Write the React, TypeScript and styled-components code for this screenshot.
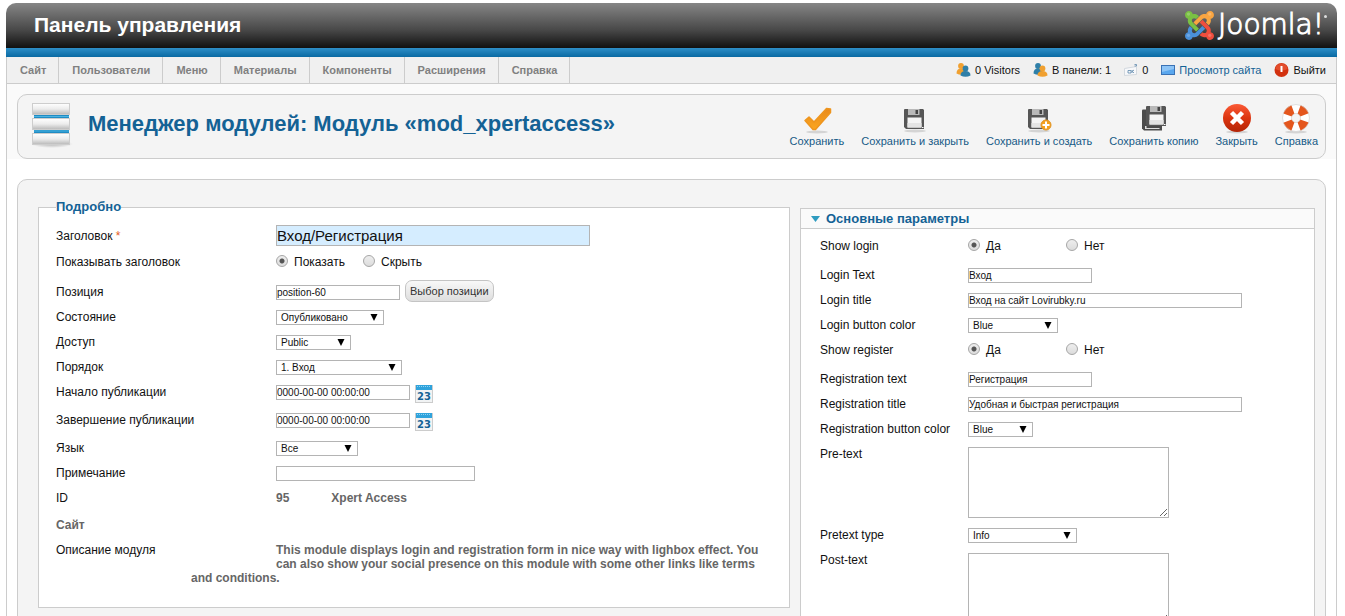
import React, { useId } from "react";
import styled, { createGlobalStyle, css } from "styled-components";

const GlobalStyle = createGlobalStyle`
  *, *::before, *::after { box-sizing: border-box; }
  body {
    margin: 0;
    background: #fff;
    color: #111;
    font: 12px/15px "Liberation Sans", Arial, sans-serif;
  }
  a { color: inherit; text-decoration: none; }
`;

/* ---------- Frame ---------- */

const Page = styled.div`
  margin: 3px 8px 0 6px;
`;

const Banner = styled.header`
  display: flex;
  align-items: center;
  justify-content: space-between;
  height: 54px;
  padding: 0 10px 10px 28px;
  border-radius: 10px 10px 0 0;
  background:
    linear-gradient(#2e8fc8, #0a6aa3) bottom / 100% 9px no-repeat,
    linear-gradient(#868686, #484848 50%, #101010 84%);
`;

const BannerTitle = styled.h1`
  margin: 0;
  color: #fff;
  font-size: 21px;
  line-height: 24px;
`;

const Brand = styled.a`
  display: flex;
  align-items: center;
  gap: 4px;
  color: #fff;
  font: 200 28px/30px "DejaVu Sans", sans-serif;
`;

const BrandName = styled.span`
  display: flex;
  align-items: flex-start;
  -webkit-text-stroke: 1px #fff;
`;

const BrandDot = styled.i`
  width: 3px;
  height: 3px;
  margin-top: 5px;
  border-radius: 50%;
  background: #ddd;
`;

const Shell = styled.div`
  border: 1px solid #ccc;
  border-top: 0;
  border-bottom: 0;
`;

/* ---------- Menu bar ---------- */

const MenuBar = styled.div`
  display: flex;
  justify-content: space-between;
  height: 27px;
  border-bottom: 1px solid #ccc;
  background: #f0f0f0;
  font-size: 11px;
  line-height: 26px;
`;

const Menu = styled.nav`
  display: flex;
`;

const MenuLink = styled.a`
  padding: 0 12px 0 13px;
  border-right: 1px solid #ccc;
  color: #808080;
  font-weight: bold;
`;

const Status = styled.div`
  display: flex;
  gap: 13px;
  padding-right: 10px;
`;

const StatusItem = styled.span<{ $link?: boolean }>`
  display: flex;
  align-items: center;
  gap: 4px;
  color: ${(p) => (p.$link ? "#146295" : "#111")};
`;

/* ---------- Title and toolbar ---------- */

const ToolbarArea = styled.div`
  padding: 10px 10px 0;
  background: #fafafa;
`;

const ToolbarBox = styled.div`
  display: flex;
  justify-content: space-between;
  height: 65px;
  padding: 7px 7px 0 13px;
  border: 1px solid #ccc;
  border-radius: 10px;
  background: #f4f4f4;
`;

const PageTitle = styled.div`
  display: flex;
  gap: 15px;
`;

const PageHeading = styled.h2`
  margin: 8px 0 0;
  color: #146295;
  font-size: 22px;
  line-height: 28px;
`;

const Tools = styled.div`
  display: flex;
  align-items: flex-start;
  gap: 17px;
`;

const Tool = styled.button`
  display: flex;
  flex-direction: column;
  align-items: center;
  gap: 1px;
  padding: 0;
  border: 0;
  background: none;
  color: #175a86;
  font: 11px/13px "Liberation Sans", Arial, sans-serif;
  cursor: pointer;
`;

/* ---------- Content ---------- */

const Content = styled.form`
  display: grid;
  grid-template-columns: 752fr 515fr;
  align-items: start;
  gap: 10px;
  margin: 20px 10px 0;
  padding: 20px 10px 20px 20px;
  border: 1px solid #ccc;
  border-radius: 10px;
  background: #f4f4f4;
`;

const Fieldset = styled.fieldset`
  min-width: 0;
  margin: 0;
  padding: 11px 17px 22px;
  border: 1px solid #ccc;
  background: #fff;
`;

const Legend = styled.legend`
  padding: 0;
  color: #146295;
  font-size: 13px;
  font-weight: bold;
  line-height: 14px;
`;

const Panel = styled.section`
  margin-top: 8px;
  border: 1px solid #ccc;
  background: #fff;
`;

const PanelHeading = styled.h3`
  display: flex;
  align-items: center;
  gap: 6px;
  height: 20px;
  margin: 0;
  padding-left: 10px;
  border-bottom: 1px solid #ccc;
  background: #fafafa;
  color: #146295;
  font-size: 13px;
`;

const PanelBody = styled.div`
  padding: 10px 19px 20px;
`;

const Row = styled.div<{ $height?: number; $label?: number }>`
  display: grid;
  grid-template-columns: ${(p) => p.$label ?? 220}px 1fr;
  align-items: start;
  min-height: ${(p) => p.$height ?? 25}px;
`;

const Label = styled.label<{ $top?: number }>`
  padding-top: ${(p) => p.$top ?? 0}px;
`;

const RowName = styled(Label).attrs({ as: "span" })``;

const Star = styled.span`
  color: #e65c1f;
`;

const Strong = styled.span`
  color: #666;
  font-weight: bold;
`;

const Controls = styled.div`
  display: flex;
  align-items: flex-start;
  gap: 5px;
`;

const box = css`
  border: 1px solid #b4b4b4;
  border-radius: 0;
  background: #fff;
  color: #111;
  font: 10px/13px "Liberation Sans", Arial, sans-serif;
`;

const TextBox = styled.input<{ $width: number; $top?: number }>`
  ${box}
  width: ${(p) => p.$width}px;
  height: 15px;
  margin: ${(p) => p.$top ?? 0}px 0 0;
  padding: 0;
`;

const TitleBox = styled(TextBox)`
  height: 21px;
  background: #d5edff;
  font-size: 15px;
  line-height: 19px;
`;

const TextArea = styled.textarea`
  ${box}
  display: block;
  width: 201px;
  height: 71px;
  margin: 0;
  padding: 2px;
`;

const SelectBox = styled.div<{ $width: number }>`
  display: grid;
  align-items: center;
  width: ${(p) => p.$width}px;

  > * { grid-area: 1 / 1; }
  > svg { justify-self: end; margin-right: 6px; pointer-events: none; }
`;

const NativeSelect = styled.select`
  ${box}
  appearance: none;
  width: 100%;
  height: 15px;
  padding: 0 4px;
`;

const Radios = styled.div<{ $option?: number }>`
  display: flex;
  gap: ${(p) => (p.$option ? 0 : 18)}px;

  > * { min-width: ${(p) => p.$option ?? 0}px; }
`;

const RadioLabel = styled.label`
  display: flex;
  align-items: flex-start;
  gap: 6px;
`;

const Radio = styled.input`
  appearance: none;
  width: 12px;
  height: 12px;
  margin: 0;
  border: 1px solid #a6a6a6;
  border-radius: 50%;
  background: linear-gradient(#eee, #dcdcdc);

  &:checked {
    background:
      radial-gradient(circle, #555 0 2px, transparent 3px),
      linear-gradient(#eee, #dcdcdc);
  }
`;

const PickButton = styled.button`
  height: 22px;
  padding: 0 4px;
  border: 1px solid #c4c4c4;
  border-radius: 7px;
  background: linear-gradient(#f8f8f8, #dedede);
  color: #333;
  font: 11px/20px "Liberation Sans", Arial, sans-serif;
`;

const CalendarButton = styled.button`
  display: block;
  width: 18px;
  height: 18px;
  padding: 0;
  border: 0;
  background: none;
`;

const ModuleInfo = styled.span`
  display: flex;
  gap: 42px;
`;

const Description = styled.p`
  margin: 0;
  color: #666;
  font-weight: bold;
  line-height: 14px;

  &::before {
    content: "";
    float: left;
    width: 85px;
    height: 28px;
  }
`;

/* ---------- Drawings ---------- */

const JoomlaMark = () => (
  <svg width="29" height="29" viewBox="0 32 448 448" aria-hidden="true">
    <path fill="#7ac143" d="M.6 92.100C.6 58.800 27.400 32 60.400 32c30 0 54.500 21.900 59.200 50.200 32.600-7.600 67.100.6 96.500 30l-44.300 44.300c-20.500-20.500-42.600-16.300-55.400-3.500-14.300 14.300-14.300 37.900 0 52.200l99.500 99.500-44 44.300c-87.700-87.200-49.700-49.700-99.800-99.700-26.800-26.500-35-64.800-24.800-98.900C20.400 144.600.6 120.700.6 92.100z" />
    <path fill="#f9a541" d="M130.100 208.500l44.300 44.300c10-10 89.700-89.700 99.700-99.800 14.300-14.300 37.600-14.300 51.900 0 12.800 12.800 17 35-3.500 55.400l44 44.300c31.200-31.200 38.500-67.600 28.900-101.200 29.200-4.100 51.900-29.200 51.900-59.500 0-33.200-26.800-60.100-59.800-60.100-30.300 0-55.400 22.500-59.500 51.600-33.800-9.900-71.700-1.500-98.300 25.100-18.300 19.100-71.100 71.500-99.600 99.900z" />
    <path fill="#f04e3e" d="M396.400 360.700c8.200-32.700-.9-68.500-26.300-93.900-11.800-12.200 5 4.700-99.500-99.700l-44.300 44.300 99.700 99.700c14.300 14.300 14.300 37.600 0 51.900-12.800 12.800-35 17-55.400-3.500l-44 44.300c27.600 30.200 68 38.800 102.700 28 5.500 27.400 29.700 48.100 58.900 48.100 33 0 59.800-26.800 59.800-60.100 0-30.200-22.500-55-51.600-59.100z" />
    <path fill="#4a90d9" d="M312.100 307.600l-44-44.300c-87 86.400-50.400 50.400-99.700 99.800-14.300 14.300-37.600 14.300-51.900 0-13.100-13.400-16.900-35.300 3.200-55.400l-44-44.300c-30.200 30.200-38 65.200-29.500 98.300-26.700 6-46.200 29.900-46.200 58.200C0 453.200 26.800 480 59.800 480c28.600 0 52.500-19.800 58.600-46.700 32.700 8.200 68.500-.6 94.200-26 32.100-32 12.200-12.400 99.500-99.700z" />
    <g fill="#fff" opacity=".2">
      <circle cx="54" cy="80" r="26" />
      <circle cx="382" cy="80" r="26" />
      <circle cx="382" cy="408" r="26" />
      <circle cx="54" cy="408" r="26" />
    </g>
  </svg>
);

const ModuleIcon = () => (
  <svg width="42" height="48" viewBox="0 0 42 48" aria-hidden="true">
    <defs>
      <linearGradient id="bar" x2="0" y2="1">
        <stop offset="0" stopColor="#fff" />
        <stop offset=".5" stopColor="#ececec" />
        <stop offset="1" stopColor="#b8b8b8" />
      </linearGradient>
      <radialGradient id="barShadow">
        <stop offset="0" stopColor="#888" stopOpacity=".6" />
        <stop offset="1" stopColor="#888" stopOpacity="0" />
      </radialGradient>
    </defs>
    <ellipse cx="21" cy="42" rx="21" ry="4" fill="url(#barShadow)" />
    <path d="M3 12h35v20H3z" fill="#1f8cc4" />
    <path d="M3 14.500h35M3 29h35" stroke="#4db4e2" />
    {[1, 16, 31].map((y) => (
      <rect key={y} x="1.500" y={y + 0.5} width="37" height="11" fill="url(#bar)" stroke="#cdcdcd" />
    ))}
  </svg>
);

const People = ({ a, b }: { a: string; b: string }) => (
  <svg width="15" height="14" viewBox="0 0 14 14" aria-hidden="true">
    <circle cx="4.500" cy="3" r="2.900" fill={a} />
    <path d="M0 10.500q0-5 4.500-5T9 10.500q-4 2.500-9 0z" fill={a} />
    <circle cx="9" cy="5.400" r="2.900" fill={b} />
    <path d="M4 12.500Q4 8 9 8t5 4.500q-5 2.500-10 0z" fill={b} />
  </svg>
);

const MailIcon = () => (
  <svg width="14" height="14" viewBox="0 0 14 14" aria-hidden="true">
    <path d="M.5 5.500l12-2v8l-12 1z" fill="#f7f8fa" stroke="#d3d9df" />
    <path d="M4 7.500h3v2.500H4zM8 7v3M8 8.500l2-1.500M8.500 8.500l1.500 1.500M10.500 1.500h2v1.500h-2" fill="none" stroke="#5c87ab" strokeWidth=".8" />
  </svg>
);

const ScreenIcon = () => (
  <svg width="14" height="10" viewBox="0 0 14 10" aria-hidden="true">
    <rect x=".5" y=".5" width="13" height="9" fill="#5aa7ee" stroke="#3a72b5" />
    <path d="M1 1h12v3L1 7z" fill="#a2d0fa" opacity=".7" />
  </svg>
);

const PowerIcon = () => (
  <svg width="15" height="15" viewBox="0 0 15 15" aria-hidden="true">
    <circle cx="7.500" cy="7" r="7" fill="#d2310f" />
    <path d="M1.500 6a6 5.500 0 0 1 12 0q-6 3-12 0z" fill="#ef6040" opacity=".6" />
    <path d="M7.500 3v6" stroke="#fff" strokeWidth="2" />
  </svg>
);

const Shadow = ({ cy = 29 }: { cy?: number }) => <ellipse cx="16" cy={cy} rx="11" ry="1.500" fill="#000" opacity=".13" />;

const CheckIcon = () => (
  <svg width="32" height="32" viewBox="0 0 32 32" aria-hidden="true">
    <defs>
      <linearGradient id="check" x2="0" y2="1">
        <stop offset="0" stopColor="#e88a1c" />
        <stop offset="1" stopColor="#fba61f" />
      </linearGradient>
    </defs>
    <Shadow cy={30} />
    <path d="M4 18.500l4-3.500 5 5L25.500 6.500l4 .5v3.500L14.500 27.500h-2.500z" fill="url(#check)" stroke="#ee951e" strokeWidth="1.500" strokeLinejoin="round" />
  </svg>
);

const DiskShape = () => (
  <>
    <path d="M0 1q0-1 1-1h18l1 1v19H2l-2-2z" fill="#565656" />
    <path d="M4 0h11.500v6H4z" fill="#b9b9b9" />
    <path d="M11.500 1h2.500v4h-2.500z" fill="#444" />
    <path d="M3.500 8.500h14v10h-14z" fill="#f4f4f4" />
    <path d="M3.500 14h14v4.500h-14z" fill="#e4e4e4" />
    <path d="M18 18h1.500v1H18z" fill="#fff" />
  </>
);

const DiskIcon = ({ plus, copy }: { plus?: boolean; copy?: boolean }) => (
  <svg width="32" height="32" viewBox="0 0 32 32" aria-hidden="true">
    {!copy && <Shadow />}
    {copy && (
      <>
        <path d="M4 8.500q0-1 1-1h19v21H6l-2-2z" fill="#4c4c4c" />
        <path d="M7 24h1.500v2h13v1H7z" fill="#ddd" />
      </>
    )}
    <g transform={copy ? "translate(8 4)" : "translate(5 7)"}>
      <DiskShape />
    </g>
    {plus && (
      <>
        <circle cx="23" cy="23" r="5" fill="#f5a11c" stroke="#e09426" />
        <path d="M23 19.500v7M19.500 23h7" stroke="#fff" strokeWidth="2" />
      </>
    )}
  </svg>
);

const CloseIcon = () => (
  <svg width="32" height="32" viewBox="0 0 32 32" aria-hidden="true">
    <defs>
      <linearGradient id="close" x2="0" y2="1">
        <stop offset="0" stopColor="#fb5a36" />
        <stop offset=".5" stopColor="#dc3510" />
        <stop offset="1" stopColor="#b32506" />
      </linearGradient>
    </defs>
    <Shadow cy={30} />
    <circle cx="16" cy="16" r="14" fill="url(#close)" />
    <path d="M10.500 10.500l11 11M21.500 10.500l-11 11" stroke="#fff" strokeWidth="4.500" />
  </svg>
);

const HelpIcon = () => (
  <svg width="32" height="32" viewBox="0 0 32 32" aria-hidden="true">
    <Shadow cy={30} />
    <circle cx="16" cy="16" r="9" fill="none" stroke="#fff" strokeWidth="9" />
    <g fill="none" stroke="#e4561d" strokeWidth="9">
      {[20, 110, 200, 290].map((a) => (
        <path key={a} d="M25 16A9 9 0 0 1 21.790 22.890" transform={`rotate(${a} 16 16)`} />
      ))}
    </g>
    <circle cx="16" cy="16" r="13.500" fill="none" stroke="#ccc" strokeWidth=".6" />
    <circle cx="16" cy="16" r="4.500" fill="none" stroke="#d0c4be" strokeWidth=".6" />
  </svg>
);

const CalendarNumber = styled.text`
  fill: #146295;
  font: bold 10px "DejaVu Sans", sans-serif;
`;

const CalendarIcon = () => (
  <svg width="18" height="18" viewBox="0 0 18 18" aria-hidden="true">
    <rect x=".5" y=".5" width="17" height="17" fill="#f1f3f4" stroke="#ccc" />
    <path d="M1 0h16v5H1z" fill="#2fa3dc" />
    <path d="M2 1.500h14" stroke="#8fd2f2" strokeDasharray="1 1" />
    <CalendarNumber x="9" y="15" textAnchor="middle">23</CalendarNumber>
  </svg>
);

/* ---------- Composite fields ---------- */

const Select = ({ id, width, value }: { id: string; width: number; value: string }) => (
  <SelectBox $width={width}>
    <NativeSelect id={id} defaultValue={value}>
      <option>{value}</option>
    </NativeSelect>
    <svg width="8" height="7" viewBox="0 0 8 7" aria-hidden="true">
      <path d="M.5 0h7L4 7z" fill="#000" />
    </svg>
  </SelectBox>
);

const RadioGroup = ({ label, options, option }: { label: string; options: string[]; option?: number }) => {
  const name = useId();
  return (
    <Radios role="radiogroup" aria-label={label} $option={option}>
      {options.map((o, i) => (
        <RadioLabel key={o}>
          <Radio type="radio" name={name} defaultChecked={i === 0} />
          {o}
        </RadioLabel>
      ))}
    </Radios>
  );
};

type FieldProps = { label: string; height?: number; column?: number; children: (id: string) => React.ReactNode };

const Field = ({ label, height, column, children }: FieldProps) => {
  const id = useId();
  return (
    <Row $height={height} $label={column}>
      <Label htmlFor={id}>{label}</Label>
      {children(id)}
    </Row>
  );
};

const DateField = ({ label }: { label: string }) => (
  <Field label={label} height={28}>
    {(id) => (
      <Controls>
        <TextBox id={id} $width={134} defaultValue="0000-00-00 00:00:00" />
        <CalendarButton type="button" aria-label={label}>
          <CalendarIcon />
        </CalendarButton>
      </Controls>
    )}
  </Field>
);

const PARAM = 148;

const ParamText = ({ label, width, value }: { label: string; width: number; value: string }) => (
  <Field label={label} column={PARAM}>
    {(id) => <TextBox id={id} $width={width} defaultValue={value} />}
  </Field>
);

const ParamSelect = ({ label, width, value }: { label: string; width: number; value: string }) => (
  <Field label={label} column={PARAM}>
    {(id) => <Select id={id} width={width} value={value} />}
  </Field>
);

const ParamArea = ({ label }: { label: string }) => (
  <Field label={label} column={PARAM} height={81}>
    {(id) => <TextArea id={id} />}
  </Field>
);

const ParamSwitch = ({ label }: { label: string }) => (
  <Row $height={29} $label={PARAM}>
    <RowName>{label}</RowName>
    <RadioGroup label={label} options={["Да", "Нет"]} option={98} />
  </Row>
);

const menu = ["Сайт", "Пользователи", "Меню", "Материалы", "Компоненты", "Расширения", "Справка"];

const tools: [string, React.ReactNode][] = [
  ["Сохранить", <CheckIcon />],
  ["Сохранить и закрыть", <DiskIcon />],
  ["Сохранить и создать", <DiskIcon plus />],
  ["Сохранить копию", <DiskIcon copy />],
  ["Закрыть", <CloseIcon />],
  ["Справка", <HelpIcon />],
];

export default function App() {
  return (
    <>
      <GlobalStyle />
      <Page>
        <Banner>
          <BannerTitle>Панель управления</BannerTitle>
          <Brand href="#">
            <JoomlaMark />
            <BrandName>
              Joomla!
              <BrandDot />
            </BrandName>
          </Brand>
        </Banner>
        <Shell>
          <MenuBar>
            <Menu>
              {menu.map((m) => (
                <MenuLink key={m} href="#">{m}</MenuLink>
              ))}
            </Menu>
            <Status>
              <StatusItem><People a="#f0a030" b="#2f7fa8" />0 Visitors</StatusItem>
              <StatusItem><People a="#2f7fa8" b="#f0a030" />В панели: 1</StatusItem>
              <StatusItem><MailIcon />0</StatusItem>
              <StatusItem as="a" href="#" $link><ScreenIcon />Просмотр сайта</StatusItem>
              <StatusItem as="a" href="#"><PowerIcon />Выйти</StatusItem>
            </Status>
          </MenuBar>
          <ToolbarArea>
            <ToolbarBox>
              <PageTitle>
                <ModuleIcon />
                <PageHeading>Менеджер модулей: Модуль «mod_xpertaccess»</PageHeading>
              </PageTitle>
              <Tools>
                {tools.map(([label, icon]) => (
                  <Tool key={label} type="button">
                    {icon}
                    {label}
                  </Tool>
                ))}
              </Tools>
            </ToolbarBox>
          </ToolbarArea>
          <Content>
            <Fieldset>
              <Legend>Подробно</Legend>
              <Row $height={30}>
                <Label htmlFor="title" $top={4}>
                  Заголовок <Star>*</Star>
                </Label>
                <TitleBox id="title" $width={314} defaultValue="Вход/Регистрация" />
              </Row>
              <Row>
                <RowName>Показывать заголовок</RowName>
                <RadioGroup label="Показывать заголовок" options={["Показать", "Скрыть"]} />
              </Row>
              <Row $height={30}>
                <Label htmlFor="position" $top={5}>Позиция</Label>
                <Controls>
                  <TextBox id="position" $width={124} $top={5} defaultValue="position-60" />
                  <PickButton type="button">Выбор позиции</PickButton>
                </Controls>
              </Row>
              <Field label="Состояние">{(id) => <Select id={id} width={108} value="Опубликовано" />}</Field>
              <Field label="Доступ">{(id) => <Select id={id} width={75} value="Public" />}</Field>
              <Field label="Порядок">{(id) => <Select id={id} width={126} value="1. Вход" />}</Field>
              <DateField label="Начало публикации" />
              <DateField label="Завершение публикации" />
              <Field label="Язык">{(id) => <Select id={id} width={82} value="Все" />}</Field>
              <Field label="Примечание">{(id) => <TextBox id={id} $width={199} />}</Field>
              <Row $height={27}>
                <RowName>ID</RowName>
                <ModuleInfo>
                  <Strong>95</Strong>
                  <Strong>Xpert Access</Strong>
                </ModuleInfo>
              </Row>
              <Row>
                <Strong>Сайт</Strong>
              </Row>
              <Row $label={135}>
                <RowName>Описание модуля</RowName>
                <Description>
                  This module displays login and registration form in nice way with lighbox effect. You can also
                  show your social presence on this module with some other links like terms and conditions.
                </Description>
              </Row>
            </Fieldset>
            <Panel>
              <PanelHeading>
                <svg width="9" height="6" viewBox="0 0 9 6" aria-hidden="true">
                  <path d="M0 0h9L4.500 6z" fill="#2f9cc0" />
                </svg>
                Основные параметры
              </PanelHeading>
              <PanelBody>
                <ParamSwitch label="Show login" />
                <ParamText label="Login Text" width={124} value="Вход" />
                <ParamText label="Login title" width={274} value="Вход на сайт Lovirubky.ru" />
                <ParamSelect label="Login button color" width={90} value="Blue" />
                <ParamSwitch label="Show register" />
                <ParamText label="Registration text" width={124} value="Регистрация" />
                <ParamText label="Registration title" width={274} value="Удобная и быстрая регистрация" />
                <ParamSelect label="Registration button color" width={65} value="Blue" />
                <ParamArea label="Pre-text" />
                <ParamSelect label="Pretext type" width={109} value="Info" />
                <ParamArea label="Post-text" />
              </PanelBody>
            </Panel>
          </Content>
        </Shell>
      </Page>
    </>
  );
}
